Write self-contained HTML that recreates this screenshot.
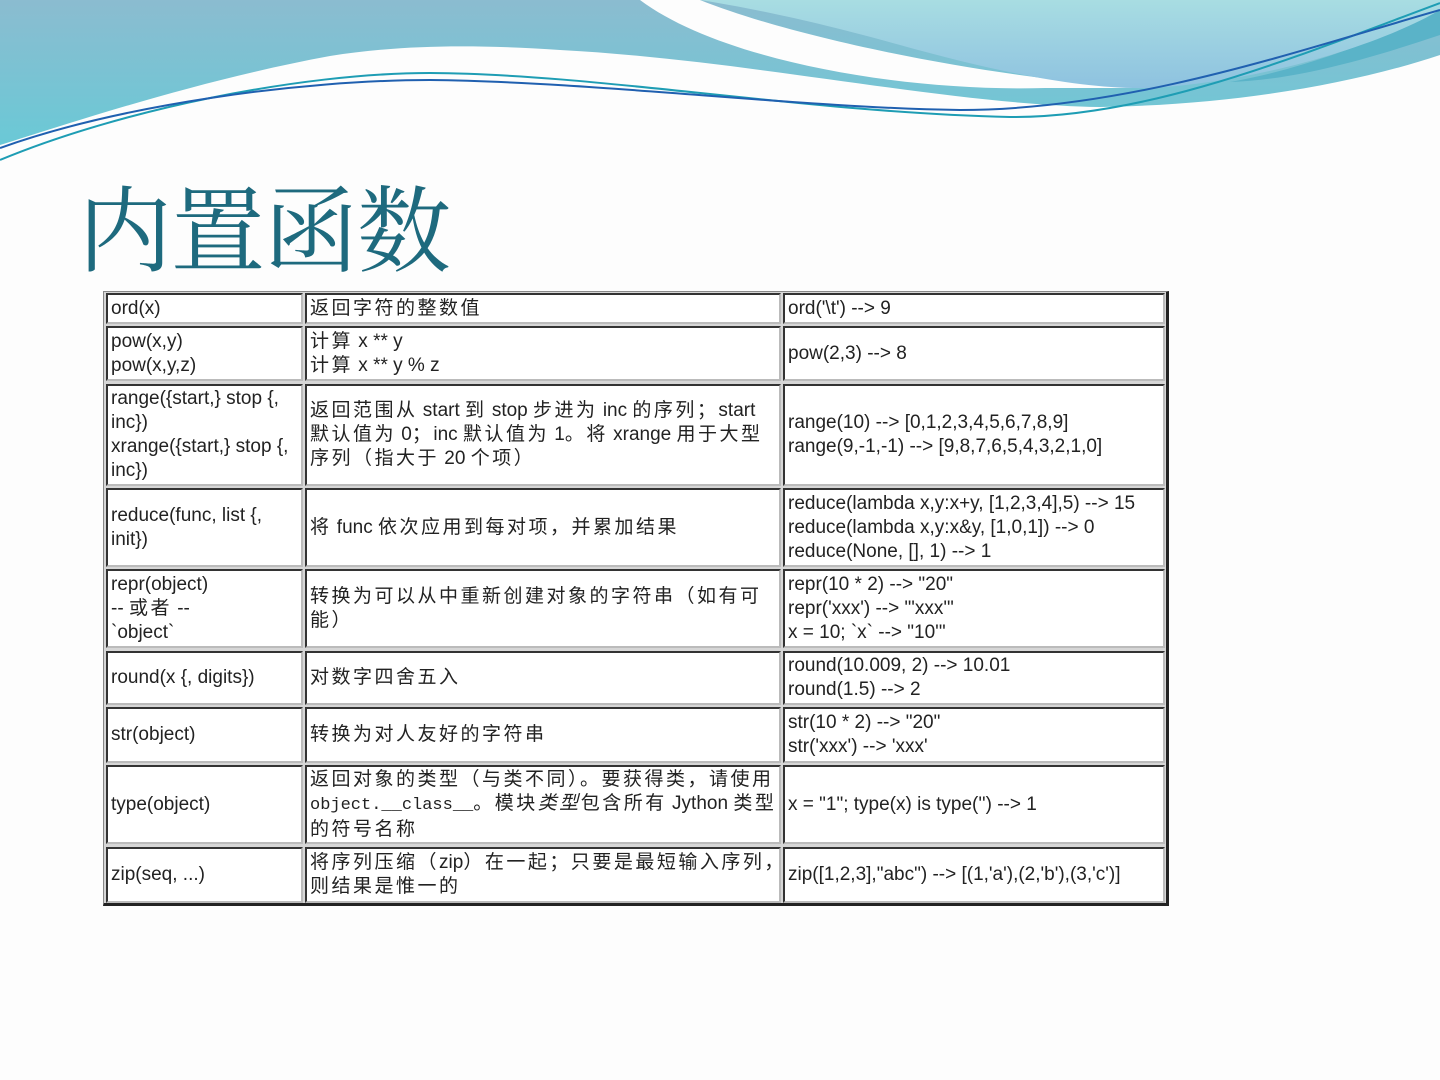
<!DOCTYPE html>
<html><head><meta charset="utf-8"><style>
body{margin:0;width:1440px;height:1080px;position:relative;overflow:hidden;background:#fdfdfd;font-family:"Liberation Sans","Noto Sans CJK SC",sans-serif;}
.t{position:absolute;left:78px;top:172px;font-family:"Noto Serif CJK SC","Noto Sans CJK SC",serif;font-size:94px;color:#1e6a7e;letter-spacing:-1px;line-height:1.1}
.tbl{position:absolute;left:103px;top:291px;width:1062px;height:611px;background:#d6d6d6;border:1px solid #888;border-right:3px solid #222;border-bottom:3px solid #222;}
.c{position:absolute;background:#fff;border-top:2px solid #333;border-left:2px solid #333;border-right:2px solid #bbb;border-bottom:2px solid #bbb;box-sizing:border-box;display:flex;align-items:center;padding-left:3px;font-size:19px;line-height:24px;color:#222;white-space:nowrap;overflow:hidden}
.z{letter-spacing:2.5px}
</style></head><body>
<svg width="1440" height="180" style="position:absolute;left:0;top:0">
<defs><linearGradient id="g1" x1="0" y1="0" x2="0" y2="1"><stop offset="0" stop-color="#8bbcd0"/><stop offset="1" stop-color="#6ac9d6"/></linearGradient>
<linearGradient id="g2" x1="0" y1="0" x2="0" y2="1"><stop offset="0" stop-color="#a8dde2"/><stop offset="1" stop-color="#8ec2e0"/></linearGradient></defs>
<path d="M0,0 L1440,0 L1440,55 C1350,85 1230,105 1100,107 C950,105 750,60 560,50 C470,44 400,45 330,56 C200,80 80,120 0,145 Z" fill="url(#g1)"/>
<path d="M1440,10 C1380,40 1300,70 1230,82 C1300,80 1380,55 1440,35 Z" fill="#5ab3c8"/>
<path d="M640,0 C720,60 900,92 1045,88 L1150,88 C1000,80 800,40 700,0 Z" fill="#fdfdfd"/>
<path d="M700,0 L1440,0 L1440,10 C1380,45 1260,82 1150,88 C1080,90 990,70 900,45 C810,20 750,8 700,0 Z" fill="url(#g2)"/>
<path d="M0,160 C120,110 300,73 430,73 C600,74 800,112 1010,117 C1150,118 1300,55 1440,3" stroke="#1e9db4" stroke-width="2" fill="none"/>
<path d="M0,148 C120,105 300,80 430,80 C600,82 800,108 960,110 C1130,110 1300,50 1440,10" stroke="#2060b0" stroke-width="2" fill="none"/>
</svg>
<div class="t">内置函数</div>
<div class="tbl"></div>
<div class="c" style="left:106px;top:293px;width:197px;height:31px">ord(x)</div>
<div class="c" style="left:305px;top:293px;width:476px;height:31px"><span class="z">返回字符的整数值</span></div>
<div class="c" style="left:783px;top:293px;width:382px;height:31px">ord('\t') --&gt; 9</div>

<div class="c" style="left:106px;top:326px;width:197px;height:55px"><div>pow(x,y)<br>pow(x,y,z)</div></div>
<div class="c" style="left:305px;top:326px;width:476px;height:55px"><div><span class="z">计算</span> x ** y<br><span class="z">计算</span> x ** y % z</div></div>
<div class="c" style="left:783px;top:326px;width:382px;height:55px">pow(2,3) --&gt; 8</div>

<div class="c" style="left:106px;top:384px;width:197px;height:102px"><div>range({start,} stop {,<br>inc})<br>xrange({start,} stop {,<br>inc})</div></div>
<div class="c" style="left:305px;top:384px;width:476px;height:102px"><div><span class="z">返回范围从</span> start <span class="z">到</span> stop <span class="z">步进为</span> inc <span class="z">的序列；</span>start<br><span class="z">默认值为</span> 0<span class="z">；</span>inc <span class="z">默认值为</span> 1<span class="z">。将</span> xrange <span class="z">用于大型</span><br><span class="z">序列（指大于</span> 20 <span class="z">个项）</span></div></div>
<div class="c" style="left:783px;top:384px;width:382px;height:102px"><div>range(10) --&gt; [0,1,2,3,4,5,6,7,8,9]<br>range(9,-1,-1) --&gt; [9,8,7,6,5,4,3,2,1,0]</div></div>

<div class="c" style="left:106px;top:488px;width:197px;height:79px"><div>reduce(func, list {,<br>init})</div></div>
<div class="c" style="left:305px;top:488px;width:476px;height:79px"><div><span class="z">将</span> func <span class="z">依次应用到每对项，并累加结果</span></div></div>
<div class="c" style="left:783px;top:488px;width:382px;height:79px"><div>reduce(lambda x,y:x+y, [1,2,3,4],5) --&gt; 15<br>reduce(lambda x,y:x&amp;y, [1,0,1]) --&gt; 0<br>reduce(None, [], 1) --&gt; 1</div></div>

<div class="c" style="left:106px;top:569px;width:197px;height:79px"><div>repr(object)<br>-- <span class="z">或者</span> --<br>`object`</div></div>
<div class="c" style="left:305px;top:569px;width:476px;height:79px"><div><span class="z">转换为可以从中重新创建对象的字符串（如有可</span><br><span class="z">能）</span></div></div>
<div class="c" style="left:783px;top:569px;width:382px;height:79px"><div>repr(10 * 2) --&gt; "20"<br>repr('xxx') --&gt; "'xxx'"<br>x = 10; `x` --&gt; "10'"</div></div>

<div class="c" style="left:106px;top:651px;width:197px;height:54px">round(x {, digits})</div>
<div class="c" style="left:305px;top:651px;width:476px;height:54px"><span class="z">对数字四舍五入</span></div>
<div class="c" style="left:783px;top:651px;width:382px;height:54px"><div>round(10.009, 2) --&gt; 10.01<br>round(1.5) --&gt; 2</div></div>

<div class="c" style="left:106px;top:707px;width:197px;height:56px">str(object)</div>
<div class="c" style="left:305px;top:707px;width:476px;height:56px"><span class="z">转换为对人友好的字符串</span></div>
<div class="c" style="left:783px;top:707px;width:382px;height:56px"><div>str(10 * 2) --&gt; "20"<br>str('xxx') --&gt; 'xxx'</div></div>

<div class="c" style="left:106px;top:765px;width:197px;height:79px">type(object)</div>
<div class="c" style="left:305px;top:765px;width:476px;height:79px"><div><span class="z">返回对象的类型（与类不同）。要获得类，请使用</span><br><span style="font-family:'Liberation Mono',monospace;font-size:17px">object.__class__</span><span class="z">。模块<i>类型</i>包含所有</span> Jython <span class="z">类型</span><br><span class="z">的符号名称</span></div></div>
<div class="c" style="left:783px;top:765px;width:382px;height:79px">x = "1"; type(x) is type('') --&gt; 1</div>

<div class="c" style="left:106px;top:847px;width:197px;height:56px">zip(seq, ...)</div>
<div class="c" style="left:305px;top:847px;width:476px;height:56px"><div><span class="z">将序列压缩（</span>zip<span class="z">）在一起；只要是最短输入序列，</span><br><span class="z">则结果是惟一的</span></div></div>
<div class="c" style="left:783px;top:847px;width:382px;height:56px">zip([1,2,3],"abc") --&gt; [(1,'a'),(2,'b'),(3,'c')]</div>
</body></html>
